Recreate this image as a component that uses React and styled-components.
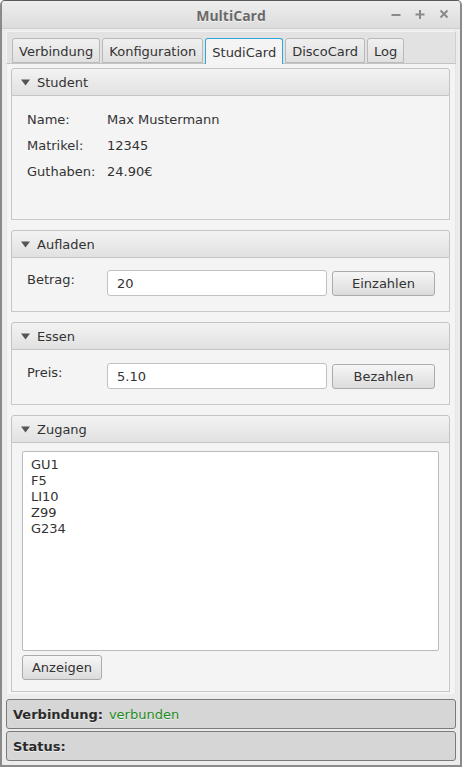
import React from 'react'
import styled, { createGlobalStyle } from 'styled-components'

const GlobalStyle = createGlobalStyle`
  html, body {
    margin: 0;
    padding: 0;
    background: #ffffff;
  }
  * {
    box-sizing: border-box;
  }
`

const Window = styled.div`
  width: 462px;
  height: 767px;
  display: flex;
  flex-direction: column;
  background: #ececec;
  border: 1px solid #5a5a5a;
  border-left: 2px solid #8a8a8a;
  border-right: 2px solid #8a8a8a;
  border-bottom: 2px solid #8a8a8a;
  border-radius: 5px 5px 0 0;
  font-family: 'DejaVu Sans', sans-serif;
  font-size: 13px;
  color: #333333;
  overflow: hidden;
`

const TitleBar = styled.div`
  flex: 0 0 28px;
  position: relative;
  display: flex;
  align-items: center;
  justify-content: center;
  padding-top: 1px;
  background: linear-gradient(#eeeeee, #dcdcdc);
  border-bottom: 1px solid #cfcfcf;
`

const Title = styled.div`
  font-family: 'Open Sans', 'DejaVu Sans', sans-serif;
  font-weight: 700;
  font-size: 14px;
  color: #6a6a6a;
  text-shadow: 0 1px 0 rgba(255, 255, 255, 0.7);
`

const Controls = styled.div`
  position: absolute;
  right: 10px;
  top: 7px;
  display: flex;
  gap: 12px;
`

const Control = styled.svg`
  width: 12px;
  height: 12px;
`

const Body = styled.div`
  flex: 1;
  display: flex;
  flex-direction: column;
  padding: 2px 4px 4px 4px;
`

const TabPane = styled.div`
  flex: 1;
  display: flex;
  flex-direction: column;
`

const TabHeader = styled.div`
  flex: 0 0 33px;
  display: flex;
  align-items: flex-end;
  gap: 2px;
  padding: 0 5px;
  background: #e2e2e2;
  border-top: 1px solid #f2f2f2;
  border-left: 1px solid #f2f2f2;
  border-right: 1px solid #d0d0d0;
  border-bottom: 1px solid #c4c4c4;
`

const Tab = styled.div`
  padding: 2px 6px 0 6px;
  display: flex;
  align-items: center;
  border: 1px solid ${p => (p.selected ? '#2fa6d8' : '#b9b9b9')};
  border-bottom: ${p => (p.selected ? 'none' : '1px solid #b9b9b9')};
  border-radius: 3px 3px 0 0;
  background: ${p => (p.selected ? '#f4f4f4' : 'linear-gradient(#f0f0f0, #e0e0e0)')};
  margin-bottom: ${p => (p.selected ? '-1px' : '0')};
  height: ${p => (p.selected ? '26px' : '25px')};
  color: #333333;
`

const TabContent = styled.div`
  flex: 1;
  display: flex;
  flex-direction: column;
  gap: 10px;
  padding: 4px 5px 2px 4px;
  background: #f4f4f4;
  border-left: 1px solid #e6e6e6;
  border-right: 1px solid #e6e6e6;
`

const Pane = styled.div`
  display: flex;
  flex-direction: column;
  flex: ${p => (p.grow ? 1 : '0 0 auto')};
`

const PaneHeader = styled.div`
  height: 28px;
  display: flex;
  align-items: center;
  gap: 7px;
  padding-left: 9px;
  background: linear-gradient(#f3f3f3, #e1e1e1);
  border: 1px solid #c4c4c4;
  border-radius: 3px 3px 0 0;
`

const Arrow = styled.svg`
  width: 9px;
  height: 7px;
`

const PaneContent = styled.div`
  flex: ${p => (p.grow ? 1 : '0 0 auto')};
  height: ${p => p.h || 'auto'};
  padding: ${p => p.pad || '0'};
  border: 1px solid #c8c8c8;
  border-top: none;
  background: #f4f4f4;
  display: flex;
  flex-direction: column;
`

const InfoRow = styled.div`
  display: grid;
  grid-template-columns: 80px 1fr;
  height: 26px;
  align-items: center;
`

const FormRow = styled.div`
  display: grid;
  grid-template-columns: 80px 220px 108px;
  align-items: start;
`

const FieldLabel = styled.div`
  padding-top: 2px;
`

const TextField = styled.div`
  height: 26px;
  display: flex;
  align-items: center;
  padding: 0 9px;
  background: #ffffff;
  border: 1px solid #c2c2c2;
  border-radius: 3px;
`

const Button = styled.div`
  height: 25px;
  width: ${p => p.w || 'auto'};
  display: flex;
  align-items: center;
  justify-content: center;
  margin-top: ${p => p.mt || '0'};
  margin-left: ${p => p.ml || '0'};
  padding: 0 10px;
  background: linear-gradient(#f6f6f6, #dcdcdc);
  border: 1px solid #ababab;
  border-radius: 3px;
  color: #333333;
`

const TextArea = styled.div`
  height: 200px;
  padding: 5px 8px;
  background: #ffffff;
  border: 1px solid #bababa;
  border-radius: 2px;
  line-height: 16px;
`

const StatusBar = styled.div`
  height: 30px;
  margin-top: ${p => p.mt};
  display: flex;
  align-items: center;
  gap: 6px;
  padding-left: 6px;
  background: #d6d6d6;
  border: 1px solid #7a7a7a;
  border-radius: 3px;
  text-shadow: 0 1px 0 rgba(255, 255, 255, 0.6);
`

const StatusKey = styled.span`
  font-weight: 700;
  color: #2a2a2a;
`

const StatusValue = styled.span`
  color: #1e8c1e;
`

const TriangleIcon = () => (
  <Arrow viewBox="0 0 9 7">
    <path d="M0 0.5 L9 0.5 L4.5 6.5 Z" fill="#555555" />
  </Arrow>
)

const TitledPane = ({ title, children, h, pad, grow }) => (
  <Pane grow={grow}>
    <PaneHeader>
      <TriangleIcon />
      {title}
    </PaneHeader>
    <PaneContent h={h} pad={pad} grow={grow}>
      {children}
    </PaneContent>
  </Pane>
)

const tabs = ['Verbindung', 'Konfiguration', 'StudiCard', 'DiscoCard', 'Log']
const zugang = ['GU1', 'F5', 'LI10', 'Z99', 'G234']

const App = () => (
  <>
    <GlobalStyle />
    <Window>
      <TitleBar>
        <Title>MultiCard</Title>
        <Controls>
          <Control viewBox="0 0 12 12">
            <path d="M1.5 7 H10.5" stroke="#8a8a8a" strokeWidth="2" />
          </Control>
          <Control viewBox="0 0 12 12">
            <path d="M1.5 6.5 H10.5 M6 2 V11" stroke="#8a8a8a" strokeWidth="2" />
          </Control>
          <Control viewBox="0 0 12 12">
            <path d="M2.5 2.5 L9.5 9.5 M9.5 2.5 L2.5 9.5" stroke="#8a8a8a" strokeWidth="2" />
          </Control>
        </Controls>
      </TitleBar>
      <Body>
        <TabPane>
          <TabHeader>
            {tabs.map(t => (
              <Tab key={t} selected={t === 'StudiCard'}>
                {t}
              </Tab>
            ))}
          </TabHeader>
          <TabContent>
            <TitledPane title="Student" h="124px" pad="10px 15px 0 15px">
              <InfoRow>
                <span>Name:</span>
                <span>Max Mustermann</span>
              </InfoRow>
              <InfoRow>
                <span>Matrikel:</span>
                <span>12345</span>
              </InfoRow>
              <InfoRow>
                <span>Guthaben:</span>
                <span>24.90€</span>
              </InfoRow>
            </TitledPane>
            <TitledPane title="Aufladen" h="54px" pad="12px 15px 0 15px">
              <FormRow>
                <FieldLabel>Betrag:</FieldLabel>
                <TextField>20</TextField>
                <Button mt="1px" ml="5px">Einzahlen</Button>
              </FormRow>
            </TitledPane>
            <TitledPane title="Essen" h="55px" pad="13px 15px 0 15px">
              <FormRow>
                <FieldLabel>Preis:</FieldLabel>
                <TextField>5.10</TextField>
                <Button mt="1px" ml="5px">Bezahlen</Button>
              </FormRow>
            </TitledPane>
            <TitledPane title="Zugang" grow pad="8px 10px 0 10px">
              <TextArea>
                {zugang.map(z => (
                  <div key={z}>{z}</div>
                ))}
              </TextArea>
              <Button w="80px" mt="4px">Anzeigen</Button>
            </TitledPane>
          </TabContent>
        </TabPane>
        <StatusBar mt="5px">
          <StatusKey>Verbindung:</StatusKey>
          <StatusValue>verbunden</StatusValue>
        </StatusBar>
        <StatusBar mt="2px">
          <StatusKey>Status:</StatusKey>
        </StatusBar>
      </Body>
    </Window>
  </>
)

export default App
